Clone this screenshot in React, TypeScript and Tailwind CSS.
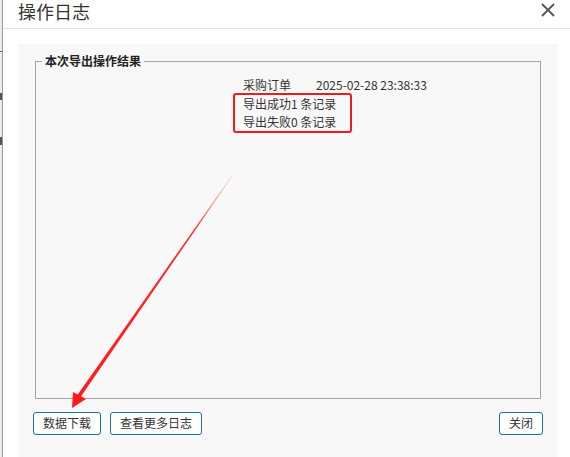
import React from 'react';

const font = { fontFamily: '"Noto Sans CJK SC", "Liberation Sans", sans-serif' };

function Btn({ children }: { children: React.ReactNode }) {
    return (
        <button className="h-[23px] px-[9px] bg-white border border-[#1d6f98] rounded-[3px] text-[12px] leading-none text-[#333]">
            {children}
        </button>
    );
}

export default function App() {
    return (
        <div className="relative w-[570px] h-[457px] overflow-hidden bg-white flex" style={font}>
            {/* page behind the dialog */}
            <div className="relative w-[3px] bg-[#ececec] border-r border-[#9a9a9a]">
                <div className="absolute left-0 top-[51px] w-[2px] h-[1px] bg-[#7a5a3a]" />
                <div className="absolute left-0 top-[93px] w-[2px] h-[7px] bg-[#555]" />
                <div className="absolute left-0 top-[137px] w-[2px] h-[8px] bg-[#555]" />
            </div>

            {/* dialog */}
            <div className="flex-1 flex flex-col">
                <div className="h-[29px] border-b border-[#e3e3e3] flex items-start justify-between pl-[15px] pr-[15px]">
                    <h1 className="text-[18px] leading-[22px] text-[#333] font-normal">操作日志</h1>
                    <svg width="14" height="14" viewBox="0 0 14 14" className="mt-[3px]">
                        <path d="M1 1 L13 13 M13 1 L1 13" stroke="#555" strokeWidth="1.8" />
                    </svg>
                </div>

                <div className="flex-1 pt-[15px] pl-[15px] pr-[12px]">
                    <div className="h-full bg-[#f8f8f8] px-[17px] pt-[9px] flex flex-col">
                        <fieldset className="h-[346px] border border-[#a4a4a4] pl-0">
                            <legend className="ml-[6px] px-[3px] text-[12px] leading-[16px] font-bold text-[#222]">
                                本次导出操作结果
                            </legend>
                            <div className="pl-[207px] pt-[7px] text-[12px] leading-[18px] text-[#333]">
                                <div className="flex">
                                    <span className="w-[73px]">采购订单</span>
                                    <span>2025-02-28 23:38:33</span>
                                </div>
                                <div className="-ml-[10px] w-[119px] border-2 border-[#f01c1c] rounded-[3px] pl-[8px] py-0 -mt-[1px]">
                                    <div>导出成功1 条记录</div>
                                    <div>导出失败0 条记录</div>
                                </div>
                            </div>
                        </fieldset>

                        <div className="mt-[10px] flex items-center">
                            <div className="-ml-[2px]">
                                <Btn>数据下载</Btn>
                            </div>
                            <div className="ml-[9px]">
                                <Btn>查看更多日志</Btn>
                            </div>
                            <div className="ml-auto -mr-[2px]">
                                <Btn>关闭</Btn>
                            </div>
                        </div>
                    </div>
                </div>
            </div>

            {/* annotation arrow */}
            <svg className="absolute inset-0 pointer-events-none" width="570" height="457" viewBox="0 0 570 457">
                <defs>
                    <linearGradient id="shaft" x1="232" y1="176" x2="79" y2="396" gradientUnits="userSpaceOnUse">
                        <stop offset="0" stopColor="#ff2a2a" stopOpacity="0.2" />
                        <stop offset="0.25" stopColor="#ff2020" stopOpacity="0.95" />
                        <stop offset="1" stopColor="#ff1a1a" />
                    </linearGradient>
                </defs>
                <polygon points="232.2,176.2 231.8,175.8 77.4,394.9 80.6,397.1" fill="url(#shaft)" />
                <polygon points="72,408 73,392 86,399" fill="#ff1a1a" />
            </svg>
        </div>
    );
}
